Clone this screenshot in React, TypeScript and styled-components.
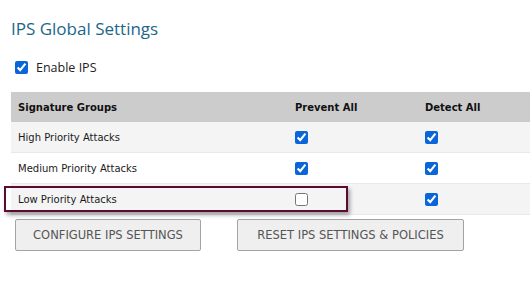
import React from 'react';
import styled, { createGlobalStyle } from 'styled-components';

const GlobalStyle = createGlobalStyle`
  html, body {
    margin: 0;
    padding: 0;
    background: #ffffff;
    overflow: hidden;
  }
`;

interface Group {
  name: string,
  prevent: boolean,
  detect: boolean,
  highlighted?: boolean
}

const groups: Group[] = [
  { name: 'High Priority Attacks', prevent: true, detect: true },
  { name: 'Medium Priority Attacks', prevent: true, detect: true },
  { name: 'Low Priority Attacks', prevent: false, detect: true, highlighted: true },
];

export default function App(){
  return (
    <Page>
      <GlobalStyle />
      <Title>IPS Global Settings</Title>
      <EnableRow>
        <Check type="checkbox" checked readOnly />
        <span>Enable IPS</span>
      </EnableRow>
      <Table>
        <HeaderRow>
          <Cell>Signature Groups</Cell>
          <Cell>Prevent All</Cell>
          <Cell>Detect All</Cell>
        </HeaderRow>
        {groups.map((g, i) => (
          <Row key={g.name} striped={i % 2 === 0}>
            <Cell>{g.name}</Cell>
            <Cell><Check type="checkbox" checked={g.prevent} readOnly /></Cell>
            <Cell><Check type="checkbox" checked={g.detect} readOnly /></Cell>
            {g.highlighted && <Highlight />}
          </Row>
        ))}
      </Table>
      <ButtonBar>
        <Button w={186}>Configure IPS Settings</Button>
        <Button w={227}>Reset IPS Settings &amp; Policies</Button>
      </ButtonBar>
    </Page>
  );
}

const Page = styled.div`
  padding: 0 0 0 11px;
  width: 530px;
  box-sizing: border-box;
  font-family: "DejaVu Sans", Verdana, sans-serif;
`;

const Title = styled.h1`
  margin: 0;
  padding-top: 17px;
  height: 44px;
  box-sizing: border-box;
  font-family: "Open Sans", "Noto Sans", sans-serif;
  font-weight: 400;
  font-size: 17px;
  color: #1b6788;
`;

const EnableRow = styled.label`
  display: flex;
  align-items: center;
  gap: 8px;
  height: 26px;
  margin-top: 10px;
  padding-left: 4px;
  font-family: "Open Sans", "Noto Sans", sans-serif;
  font-size: 12.5px;
  color: #222;
`;

const Check = styled.input`
  margin: 0;
  width: 13px;
  height: 13px;
  accent-color: #0a66d8;
`;

const Table = styled.div`
  margin-top: 12px;
  width: 530px;
`;

const HeaderRow = styled.div`
  display: grid;
  grid-template-columns: 277px 130px 1fr;
  align-items: center;
  height: 30px;
  padding-left: 7px;
  background: #cccccc;
  font-weight: 700;
  font-size: 10px;
  color: #111;
`;

const Row = styled.div<{ striped: boolean }>`
  position: relative;
  display: grid;
  grid-template-columns: 277px 130px 1fr;
  align-items: center;
  height: 30px;
  padding-left: 7px;
  background: ${p => p.striped ? '#f4f4f4' : '#ffffff'};
  border-bottom: 1px solid #e8e8e8;
  font-size: 10px;
  color: #1a1a1a;
`;

const Cell = styled.div`
  display: flex;
  align-items: center;
`;

const Highlight = styled.div`
  position: absolute;
  left: -7px;
  top: 2px;
  box-sizing: border-box;
  width: 344px;
  height: 26px;
  border: 2px solid #5c0a32;
  box-shadow: 2px 3px 4px rgba(0, 0, 0, 0.35);
  pointer-events: none;
`;

const ButtonBar = styled.div`
  display: flex;
  gap: 36px;
  padding: 4px 0 0 4px;
`;

const Button = styled.button<{ w: number }>`
  width: ${p => p.w}px;
  height: 32px;
  padding: 0;
  background: #efefef;
  border: 1px solid #a3a3a3;
  border-radius: 2px;
  font-family: "DejaVu Sans", Verdana, sans-serif;
  font-size: 11.5px;
  text-transform: uppercase;
  color: #555;
`;
